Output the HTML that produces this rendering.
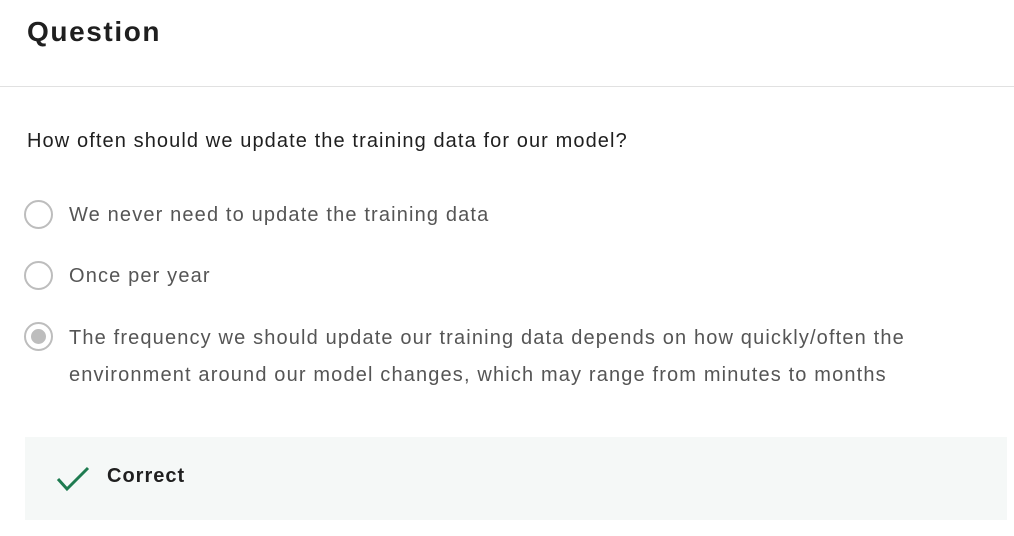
<!DOCTYPE html>
<html><head><style>
*{margin:0;padding:0;box-sizing:border-box}
body{width:1014px;height:536px;background:#fff;font-family:"Liberation Sans",sans-serif;position:relative;overflow:hidden}
.t{position:absolute;left:27px;top:16px;font-size:28px;font-weight:bold;color:#1f1f1f;letter-spacing:1.6px}
.hr{position:absolute;left:0;top:86px;width:1014px;height:1px;background:#e1e1e1}
.q{position:absolute;left:27px;top:130px;font-size:20px;color:#1f1f1f;letter-spacing:1.1px}
.o{position:absolute;left:69px;font-size:20px;color:#555;line-height:37px;letter-spacing:1.15px;white-space:nowrap}
.r{position:absolute;left:24px;width:29px;height:29px;border:2px solid #bdbdbd;border-radius:50%}
.r.s::after{content:"";position:absolute;left:5px;top:5px;width:15px;height:15px;border-radius:50%;background:#bdbdbd}
.box{position:absolute;left:25px;top:437px;width:982px;height:83px;background:#f5f8f7}
.c{position:absolute;left:107px;top:465px;font-size:20px;font-weight:bold;color:#1f1f1f;letter-spacing:1px}
</style></head><body>
<div class="t">Question</div>
<div class="hr"></div>
<div class="q">How often should we update the training data for our model?</div>
<div class="r" style="top:200px"></div>
<div class="o" style="top:197px">We never need to update the training data</div>
<div class="r" style="top:261px"></div>
<div class="o" style="top:258px">Once per year</div>
<div class="r s" style="top:322px"></div>
<div class="o" style="top:320px">The frequency we should update our training data depends on how quickly/often the<br>environment around our model changes, which may range from minutes to months</div>
<div class="box"></div>
<svg style="position:absolute;left:55px;top:464px" width="36" height="30"><path d="M3 15 L12 25 L33 4" fill="none" stroke="#1e7b50" stroke-width="3"/></svg>
<div class="c">Correct</div>
</body></html>
